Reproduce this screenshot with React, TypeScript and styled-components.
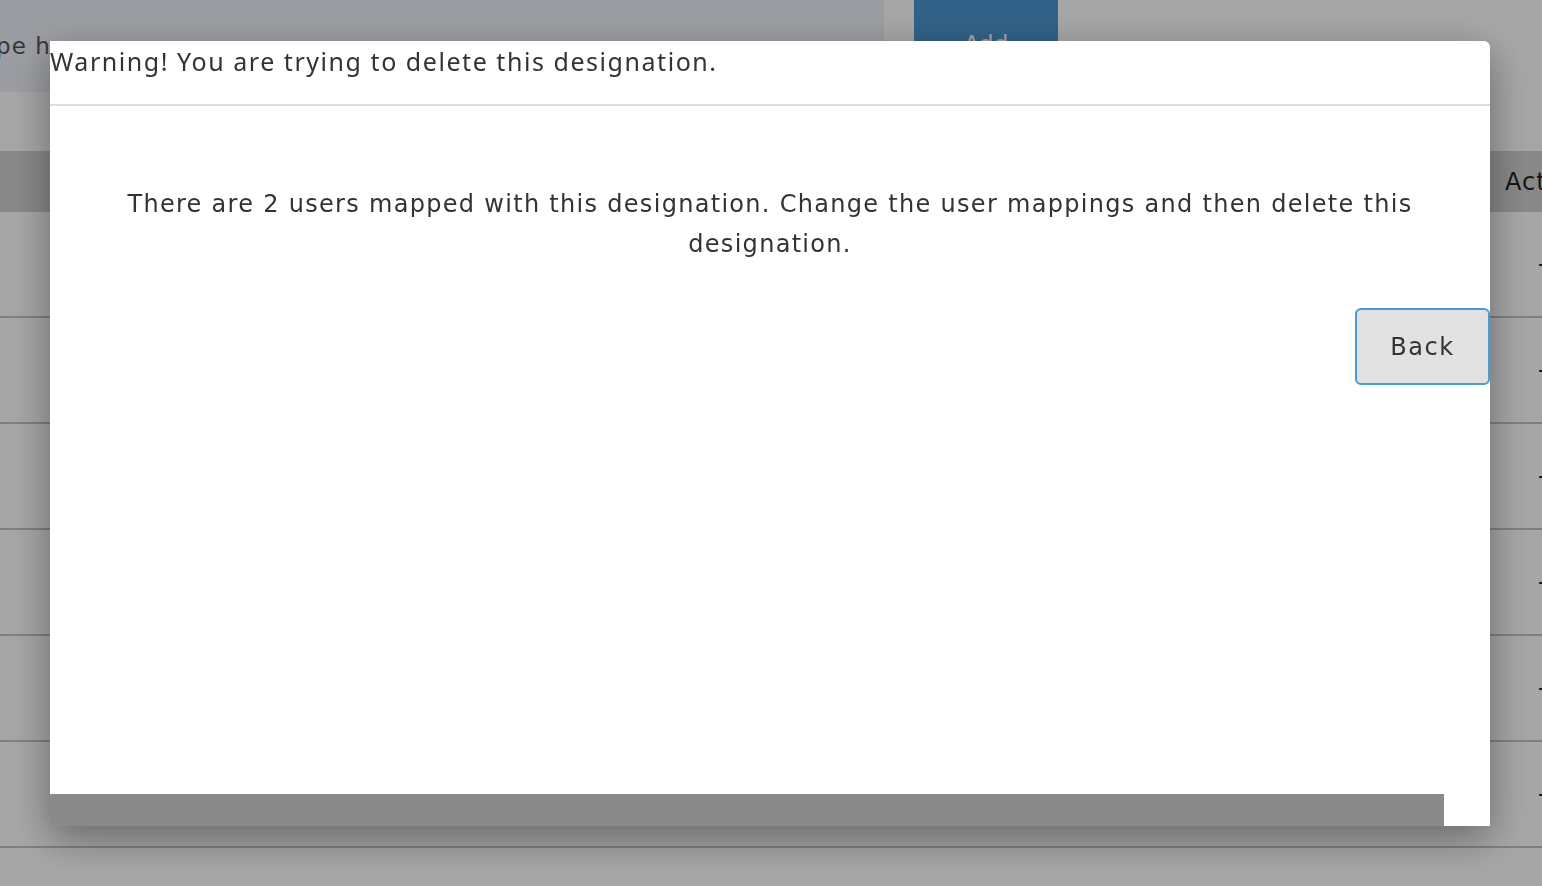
import React from "react";
import styled, { createGlobalStyle } from "styled-components";

const GlobalStyle = createGlobalStyle`
  html, body {
    margin: 0;
    padding: 0;
    background: #ffffff;
    overflow: hidden;
  }
  body {
    font-family: "DejaVu Sans", "Noto Sans", sans-serif;
    color: #333333;
  }
`;

const Page = styled.div`
  width: 1542px;
  height: 886px;
  overflow: hidden;
  position: relative;
`;

const Toolbar = styled.div`
  display: flex;
  align-items: stretch;
  gap: 30px;
  margin: -10px 0 0 -50px;
  height: 102px;
`;

const SearchInput = styled.div`
  width: 934px;
  background: #eff2f9;
  border-radius: 0 0 12px 0;
  display: flex;
  align-items: center;
  padding: 10px 20px 0 20px;
  box-sizing: border-box;
  font-size: 23px;
  letter-spacing: 1px;
  color: #555;
`;

const AddButton = styled.div`
  width: 144px;
  background: #4e96d1;
  color: #fff;
  border-radius: 12px;
  display: flex;
  align-items: center;
  justify-content: center;
  font-size: 23px;
  padding-top: 6px;
`;

const Table = styled.div`
  margin-top: 59px;
  display: flex;
  flex-direction: column;
`;

const HeaderRow = styled.div`
  height: 61px;
  background: #d2d2d2;
  display: flex;
  align-items: center;
  justify-content: flex-end;
  font-size: 24px;
  letter-spacing: 1px;
  color: #222;
`;

const HeaderCell = styled.div`
  width: 37px;
  overflow: hidden;
  white-space: nowrap;
`;

const Row = styled.div`
  height: 104px;
  border-bottom: 2px solid #c4c4c4;
  display: flex;
  align-items: center;
  justify-content: flex-end;
  font-size: 24px;
  color: #222;
`;

const DashCell = styled.div`
  width: 4px;
  overflow: hidden;
  white-space: nowrap;
`;

const Overlay = styled.div`
  position: fixed;
  inset: 0;
  background: rgba(0, 0, 0, 0.35);
  padding: 41px 52px 60px 50px;
  box-sizing: border-box;
  display: flex;
  align-items: flex-start;
`;

const Modal = styled.div`
  width: 1440px;
  height: 785px;
  background: #ffffff;
  border-radius: 0 6px 0 0;
  box-shadow: 0 12px 40px rgba(0, 0, 0, 0.38);
  display: flex;
  flex-direction: column;
  overflow: hidden;
`;

const ModalHeader = styled.div`
  height: 63px;
  border-bottom: 2px solid #dddddd;
  font-family: "Noto Sans", "DejaVu Sans", sans-serif;
  font-size: 25px;
  letter-spacing: 1.55px;
  line-height: 40px;
  color: #333;
`;

const ModalBody = styled.div`
  flex: 1;
  padding: 78px 70px 0 70px;
  display: flex;
  flex-direction: column;
`;

const Message = styled.p`
  margin: 0;
  text-align: center;
  font-size: 24px;
  letter-spacing: 1.3px;
  line-height: 40px;
  color: #333;
`;

const Actions = styled.div`
  display: flex;
  justify-content: flex-end;
  margin: 44px -70px 0 0;
`;

const BackButton = styled.button`
  width: 135px;
  height: 77px;
  background: #e1e1e1;
  border: 2px solid #4a9ad6;
  border-radius: 6px;
  font-family: "DejaVu Sans", "Noto Sans", sans-serif;
  font-size: 24px;
  letter-spacing: 1.5px;
  color: #333;
  cursor: pointer;
`;

const ScrollBar = styled.div`
  height: 32px;
  width: 1394px;
  background: #8a8a8a;
`;

export default function App() {
  const rows = [0, 1, 2, 3, 4, 5];
  return (
    <>
      <GlobalStyle />
      <Page>
        <Toolbar>
          <SearchInput>Type here</SearchInput>
          <AddButton>Add</AddButton>
        </Toolbar>
        <Table>
          <HeaderRow>
            <HeaderCell>Action</HeaderCell>
          </HeaderRow>
          {rows.map((r) => (
            <Row key={r}>
              <DashCell>-</DashCell>
            </Row>
          ))}
        </Table>
        <Overlay>
          <Modal>
            <ModalHeader>Warning! You are trying to delete this designation.</ModalHeader>
            <ModalBody>
              <Message>
                There are 2 users mapped with this designation. Change the user mappings and then delete this
                designation.
              </Message>
              <Actions>
                <BackButton>Back</BackButton>
              </Actions>
            </ModalBody>
            <ScrollBar />
          </Modal>
        </Overlay>
      </Page>
    </>
  );
}
